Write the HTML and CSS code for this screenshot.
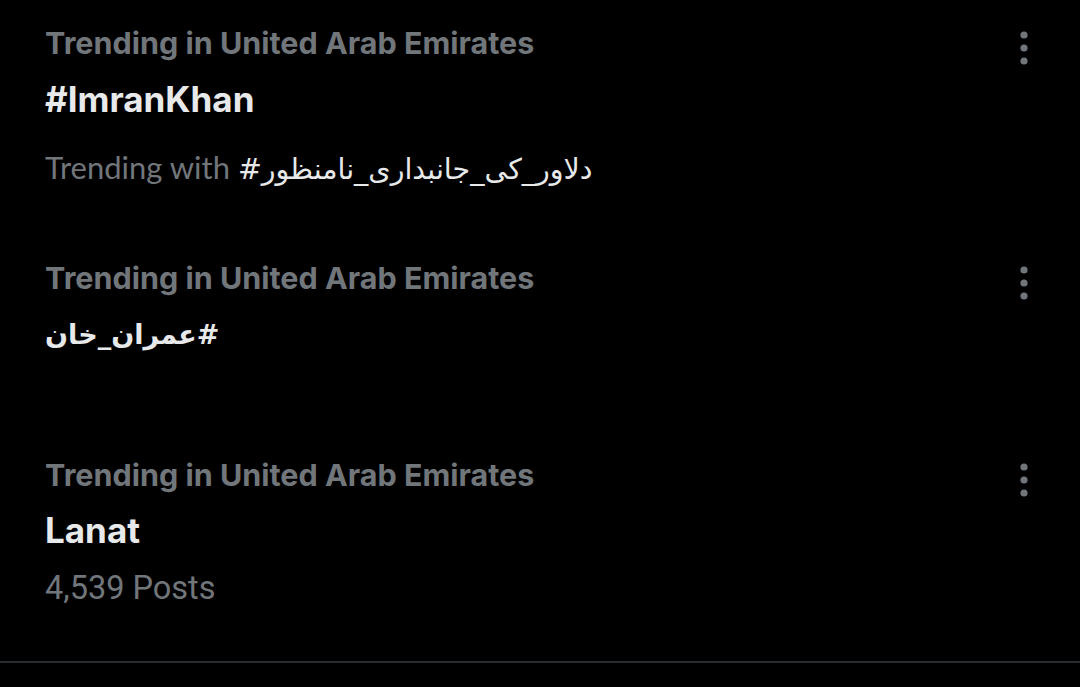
FILE: index.html
```html
<!DOCTYPE html>
<html lang="en">
<head>
    <meta charset="UTF-8">
    <meta name="viewport" content="width=device-width, initial-scale=1.0">
    <title>Trends</title>
    <link rel="stylesheet" href="styles.css">
</head>
<body>
    <div class="trends">
        <div class="trend first">
            <div class="trend-body">
                <div class="trend-place">Trending in United Arab Emirates</div>
                <div class="trend-name">#ImranKhan</div>
                <div class="trend-meta with">Trending with <span class="urdu">#دلاور_کی_جانبداری_نامنظور</span></div>
            </div>
            <svg class="more" width="24" height="42" viewBox="0 0 24 42">
                <circle cx="12" cy="8" r="3.6"/>
                <circle cx="12" cy="21" r="3.6"/>
                <circle cx="12" cy="34" r="3.6"/>
            </svg>
        </div>

        <div class="trend second">
            <div class="trend-body">
                <div class="trend-place">Trending in United Arab Emirates</div>
                <div class="trend-name urdu" dir="rtl">#عمران_خان</div>
            </div>
            <svg class="more" width="24" height="42" viewBox="0 0 24 42">
                <circle cx="12" cy="8" r="3.6"/>
                <circle cx="12" cy="21" r="3.6"/>
                <circle cx="12" cy="34" r="3.6"/>
            </svg>
        </div>

        <div class="trend third">
            <div class="trend-body">
                <div class="trend-place">Trending in United Arab Emirates</div>
                <div class="trend-name">Lanat</div>
                <div class="trend-meta posts">4,539 Posts</div>
            </div>
            <svg class="more" width="24" height="42" viewBox="0 0 24 42">
                <circle cx="12" cy="8" r="3.6"/>
                <circle cx="12" cy="21" r="3.6"/>
                <circle cx="12" cy="34" r="3.6"/>
            </svg>
        </div>
    </div>
</body>
</html>
```

FILE: styles.css
```css
body {
    margin: 0;
    background-color: #000;
    font-family: Inter, "DejaVu Sans", sans-serif;
    color: #e7e9ea;
}

.trends {
    border-bottom: 2px solid #2a2d30;
    height: 661px;
}

.trend {
    display: flex;
    justify-content: space-between;
    align-items: flex-start;
    padding: 0 44px 0 45px;
}

.trend.first {
    padding-top: 23px;
}

.trend.second {
    padding-top: 68px;
}

.trend.third {
    padding-top: 96px;
}

.trend-body {
    display: flex;
    flex-direction: column;
}

.trend-place {
    font-size: 30.5px;
    font-weight: 700;
    line-height: 40px;
    color: #71767b;
}

.trend-name {
    margin-top: 12px;
    font-size: 35px;
    font-weight: 700;
    line-height: 48px;
    color: #e7e9ea;
}

.third .trend-name {
    margin-top: 11px;
}

.trend-name.urdu {
    margin-top: 13px;
    font-size: 27px;
    align-self: flex-start;
}

.trend-meta {
    font-size: 30px;
    line-height: 40px;
    color: #71767b;
}

.trend-meta.with {
    margin-top: 24px;
    font-family: Lato, "DejaVu Sans", sans-serif;
    font-size: 31px;
}

.trend-meta.posts {
    margin-top: 14px;
    font-family: Roboto, sans-serif;
    font-size: 32.5px;
}

.urdu {
    font-family: "DejaVu Sans", sans-serif;
}

.trend-meta .urdu {
    font-size: 28.5px;
    color: #e7e9ea;
}

.more {
    fill: #71767b;
    margin-top: 4px;
}
```
